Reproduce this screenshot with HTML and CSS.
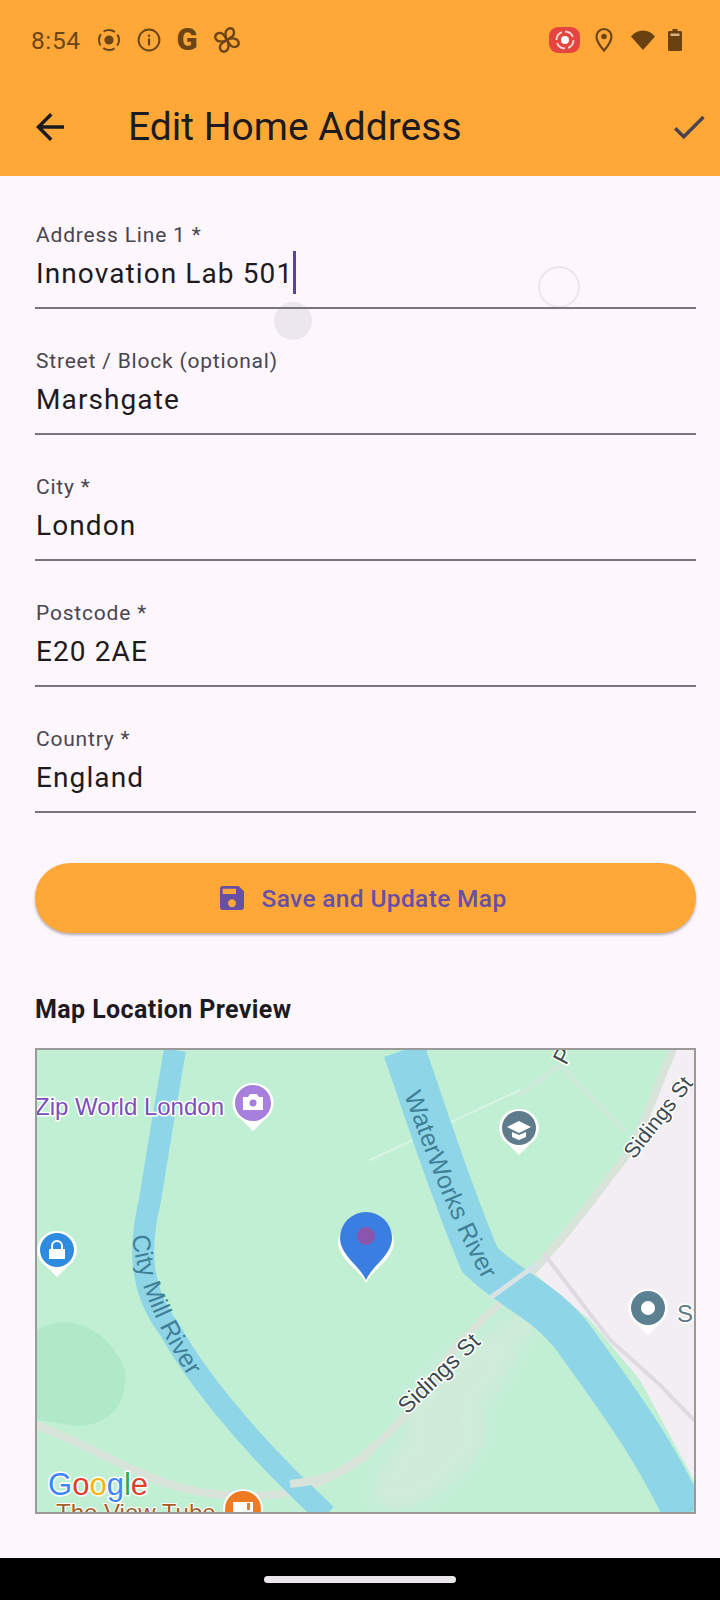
FILE: index.html
```html
<!DOCTYPE html>
<html lang="en">
<head>
  <meta charset="UTF-8">
  <title>Edit Home Address</title>
  <link rel="stylesheet" href="styles.css">
</head>
<body>
  <div class="screen">
    <div class="header">
      <div class="statusbar">
        <span class="time">8:54</span>
        <svg class="status-icon first" viewBox="0 0 24 24"><circle cx="12" cy="12" r="10" fill="none" stroke="#6b4514" stroke-width="2" stroke-dasharray="12 3.7" stroke-dashoffset="6"/><circle cx="12" cy="12" r="4.6" fill="#6b4514"/></svg>
        <svg class="status-icon" viewBox="0 0 24 24"><circle cx="12" cy="12" r="10.4" fill="none" stroke="#6b4514" stroke-width="2"/><rect x="10.9" y="10.4" width="2.2" height="7" fill="#6b4514"/><rect x="10.9" y="6.6" width="2.2" height="2.2" fill="#6b4514"/></svg>
        <span class="status-g">G</span>
        <svg class="status-fan" viewBox="0 0 24 24">
          <g fill="none" stroke="#6b4514" stroke-width="2">
            <path d="M12 12C10 8 10 3 14 2C18 1.500 19 6 17 8.500C15.500 10 13.500 11 12 12z"/>
            <path d="M12 12C10 8 10 3 14 2C18 1.500 19 6 17 8.500C15.500 10 13.500 11 12 12z" transform="rotate(90 12 12)"/>
            <path d="M12 12C10 8 10 3 14 2C18 1.500 19 6 17 8.500C15.500 10 13.500 11 12 12z" transform="rotate(180 12 12)"/>
            <path d="M12 12C10 8 10 3 14 2C18 1.500 19 6 17 8.500C15.500 10 13.500 11 12 12z" transform="rotate(270 12 12)"/>
          </g>
        </svg>
        <div class="status-right">
          <div class="rec-chip">
            <svg viewBox="0 0 24 24" width="24" height="24"><circle cx="12" cy="12" r="8.500" fill="none" stroke="#ffd9d4" stroke-width="1.800" stroke-dasharray="10 3.300"/><circle cx="12" cy="12" r="4" fill="#fff"/></svg>
          </div>
          <svg class="status-pin" viewBox="0 0 20 26"><path d="M10 2a7.500 7.500 0 0 0-7.500 7.500C2.500 15 10 23.500 10 23.500S17.500 15 17.500 9.500A7.500 7.500 0 0 0 10 2z" fill="none" stroke="#6b4514" stroke-width="2.200"/><circle cx="10" cy="9.500" r="2.800" fill="#6b4514"/></svg>
          <svg class="status-wifi" viewBox="0 0 26 22"><path d="M13 21L1 7.500C4 3.500 8.200 1.500 13 1.500S22 3.500 25 7.500z" fill="#69400f"/></svg>
          <svg class="status-battery" viewBox="0 0 14 22"><path d="M4.500 0h5v2H12.500a1.500 1.500 0 0 1 1.500 1.500V20.500A1.500 1.500 0 0 1 12.500 22H1.500A1.500 1.500 0 0 1 0 20.500V3.500A1.500 1.500 0 0 1 1.500 2H4.500z" fill="#69400f"/><rect x="2.500" y="4.500" width="9" height="2.500" fill="#dcb27a"/></svg>
        </div>
      </div>
      <div class="appbar">
        <svg class="bar-icon" viewBox="0 0 24 24"><path d="M20 11H7.830l5.590-5.590L12 4l-8 8 8 8 1.410-1.410L7.830 13H20v-2z"/></svg>
        <h1 class="title">Edit Home Address</h1>
        <svg class="bar-icon check" viewBox="0 0 24 24"><path d="M9 16.170L4.830 12l-1.420 1.410L9 19 21 7l-1.410-1.410z"/></svg>
      </div>
    </div>

    <div class="content">
      <div class="ripple-ring"></div>
      <div class="ripple-blob"></div>

      <div class="field">
        <div class="field-label">Address Line 1 *</div>
        <div class="field-value">Innovation Lab 501<span class="caret"></span></div>
      </div>
      <div class="field">
        <div class="field-label">Street / Block (optional)</div>
        <div class="field-value">Marshgate</div>
      </div>
      <div class="field">
        <div class="field-label">City *</div>
        <div class="field-value">London</div>
      </div>
      <div class="field">
        <div class="field-label">Postcode *</div>
        <div class="field-value">E20 2AE</div>
      </div>
      <div class="field">
        <div class="field-label">Country *</div>
        <div class="field-value">England</div>
      </div>

      <button class="save-btn">
        <svg viewBox="0 0 24 24" width="32" height="32"><path d="M17 3H5c-1.110 0-2 .9-2 2v14c0 1.100.89 2 2 2h14c1.100 0 2-.9 2-2V7l-4-4zm-5 16c-1.660 0-3-1.340-3-3s1.340-3 3-3 3 1.340 3 3-1.340 3-3 3zm3-10H5V5h10v4z"/></svg>
        Save and Update Map
      </button>

      <h2 class="map-title">Map Location Preview</h2>

      <div class="map">
        <!-- viewBox is in page pixels so map features read off the screenshot directly -->
        <svg viewBox="37 1050 657 462" width="657" height="462">
          <defs>
            <filter id="soft"><feGaussianBlur stdDeviation="9"/></filter>
          </defs>
          <rect x="37" y="1050" width="657" height="462" fill="#c0efd4"/>
          <path d="M37 1330C70 1310 110 1330 125 1370C130 1410 100 1430 70 1425L37 1420z" fill="#b0e9c8"/>
          <path d="M675 1050L623 1160L530 1270L590 1320L640 1380L694 1480V1050z" fill="#f2eef3"/>

          <g fill="#dce8de" filter="url(#soft)" opacity=".6">
            <ellipse cx="460" cy="1385" rx="70" ry="30" transform="rotate(-40 460 1385)"/>
            <ellipse cx="430" cy="1460" rx="70" ry="32" transform="rotate(-40 430 1460)"/>
            <ellipse cx="515" cy="1330" rx="34" ry="14" transform="rotate(-40 515 1330)"/>
          </g>

          <g fill="none" stroke-linecap="round">
            <path d="M672 1052C655 1090 640 1140 623 1160S560 1250 493 1310S430 1400 370 1450S260 1500 207 1493S120 1460 37 1425" stroke-width="8" stroke="#d8e4da"/>
            <path d="M560 1065L625 1130M560 1065L520 1095" stroke-width="5" stroke="#cde9da"/>
            <path d="M370 1160L520 1090" stroke-width="2" stroke="#d6f3e3"/>
            <path d="M545 1255L610 1340L660 1385L694 1420" stroke-width="4" stroke="#dedbe0"/>
          </g>

          <g fill="none" stroke="#8fd5e8">
            <path d="M175 1050C168 1090 162 1125 150 1200C138 1250 140 1290 170 1330C195 1375 240 1430 290 1480L326 1515" stroke-width="22"/>
            <path d="M404 1050C425 1110 450 1190 480 1260C510 1290 545 1300 575 1340C610 1390 650 1440 685 1515" stroke-width="42"/>
          </g>
          <path d="M490 1298L540 1262" stroke="#d8e3e6" stroke-width="5" fill="none"/>
          <path d="M290 1484C330 1480 350 1470 372 1450" stroke="#d8e4da" stroke-width="8" fill="none"/>

          <path id="cityPath" d="M132 1236C138 1284 158 1334 204 1400" fill="none"/>
          <path id="waterPath" d="M404 1095C425 1150 450 1225 497 1305" fill="none"/>
          <text class="map-river"><textPath href="#cityPath">City Mill River</textPath></text>
          <text class="map-river"><textPath href="#waterPath">WaterWorks River</textPath></text>
          <text class="map-road road-small" transform="translate(634 1160) rotate(-52)">Sidings St</text>
          <text class="map-road" transform="translate(407 1415) rotate(-44)">Sidings St</text>
          <text class="map-road" transform="translate(566 1066) rotate(-62)">P</text>
          <text class="map-poi-grey" x="677" y="1322">St</text>
          <text class="map-poi-purple" x="35" y="1115">Zip World London</text>

          <g>
            <path d="M253 1083a20 20 0 0 1 11 37l-11 11l-11-11a20 20 0 0 1 11-37z" fill="#fff"/>
            <circle cx="253" cy="1103" r="18" fill="#a77fdc"/>
            <path d="M243 1097h5l2-3h7l2 3h4v13h-20z" fill="#fff"/>
            <circle cx="253" cy="1103" r="3.500" fill="#a77fdc"/>
          </g>
          <g>
            <path d="M57 1231a19 19 0 0 1 11 35l-11 11l-11-11a19 19 0 0 1 11-35z" fill="#fff"/>
            <circle cx="57" cy="1250" r="17" fill="#2f8be0"/>
            <rect x="49" y="1249" width="16" height="10" fill="#fff"/>
            <path d="M52 1249v-3a5 5 0 0 1 10 0v3" fill="none" stroke="#fff" stroke-width="2"/>
          </g>
          <g>
            <path d="M519 1109a19 19 0 0 1 11 35l-11 11l-11-11a19 19 0 0 1 11-35z" fill="#fff"/>
            <circle cx="519" cy="1128" r="17" fill="#5f7c8c"/>
            <path d="M507 1127l12-6l12 6l-12 6z" fill="#fff"/>
            <path d="M512 1132v5l7 3l7-3v-5l-7 3z" fill="#fff"/>
          </g>
          <g>
            <path d="M648 1289a19 19 0 0 1 11 35l-11 11l-11-11a19 19 0 0 1 11-35z" fill="#fff"/>
            <circle cx="648" cy="1308" r="17" fill="#5b8091"/>
            <circle cx="648" cy="1308" r="7" fill="#fff"/>
          </g>
          <g>
            <circle cx="243" cy="1509" r="20" fill="#fff"/>
            <circle cx="243" cy="1509" r="18" fill="#ee7b22"/>
            <rect x="233" y="1502" width="20" height="14" fill="#fff"/>
            <rect x="247" y="1503" width="3" height="7" fill="#ee7b22"/>
          </g>

          <path d="M366 1216a28 28 0 0 1 28 26c0 17-22 28-28 41c-6-13-28-24-28-41a28 28 0 0 1 28-26z" fill="#fff"/>
          <path d="M366 1212a26 26 0 0 1 26 26c0 17-20 28-26 42c-6-14-26-25-26-42a26 26 0 0 1 26-26z" fill="#3a7ee2"/>
          <circle cx="366" cy="1236" r="9" fill="#8a55ab"/>

          <text class="map-google" x="48" y="1495"><tspan fill="#4285f4">G</tspan><tspan fill="#e0402f">o</tspan><tspan fill="#f5b60d">o</tspan><tspan fill="#4285f4">g</tspan><tspan fill="#34a853">l</tspan><tspan fill="#e0402f">e</tspan></text>
          <text class="map-poi-orange" x="56" y="1521">The View Tube</text>
        </svg>
      </div>
    </div>

    <div class="navbar"><div class="home-pill"></div></div>
  </div>
</body>
</html>
```
FILE: styles.css
```css
html, body {
  margin: 0;
  padding: 0;
}
body {
  font-family: Roboto, "Noto Sans", sans-serif;
  background: #fdf6fc;
  color: #1d1b20;
}
.screen {
  width: 720px;
  height: 1600px;
  display: flex;
  flex-direction: column;
  overflow: hidden;
}

/* top orange area */
.header {
  height: 176px;
  background: #ffa838;
}
.statusbar {
  height: 78px;
  box-sizing: border-box;
  display: flex;
  align-items: center;
  padding: 2px 38px 0 31px;
  color: #6b4514;
}
.time {
  font-size: 24.5px;
  letter-spacing: 0.6px;
  width: 66px;
}
.status-icon {
  width: 24px;
  height: 24px;
  margin-right: 16px;
}
.status-g {
  width: 24px;
  margin: 0 14px 0 -2px;
  font-size: 31px;
  font-weight: 900;
  text-align: center;
  line-height: 24px;
}
.status-fan {
  width: 28px;
  height: 28px;
}
.status-right {
  margin-left: auto;
  display: flex;
  align-items: center;
}
.rec-chip {
  width: 31px;
  height: 26px;
  border-radius: 9px;
  background: #e4463f;
  display: flex;
  align-items: center;
  justify-content: center;
}
.status-pin {
  width: 20px;
  height: 26px;
  margin-left: 14px;
}
.status-wifi {
  width: 26px;
  height: 22px;
  margin-left: 16px;
}
.status-battery {
  width: 14px;
  height: 22px;
  margin-left: 12px;
}
.appbar {
  height: 98px;
  display: flex;
  align-items: center;
  padding: 0 10px 0 29px;
}
.bar-icon {
  width: 42px;
  height: 42px;
  fill: #1d1b20;
  flex-shrink: 0;
}
.bar-icon.check {
  margin-left: auto;
  fill: #49454f;
}
.title {
  margin: 0 0 0 57px;
  font-size: 39px;
  font-weight: 400;
  line-height: 44px;
}

/* form */
.content {
  position: relative;
  flex: 1;
  padding: 47px 24px 0 35px;
}
.ripple-ring {
  position: absolute;
  left: 538px;
  top: 90px;
  width: 38px;
  height: 38px;
  border: 2px solid #ebe6ee;
  border-radius: 50%;
}
.ripple-blob {
  position: absolute;
  left: 274px;
  top: 126px;
  width: 38px;
  height: 38px;
  border-radius: 50%;
  background: #ece6ee;
}
.field {
  position: relative;
  height: 86px;
  margin-bottom: 40px;
  border-bottom: 2px solid #79747e;
  box-sizing: border-box;
}
.field-label {
  padding-left: 1px;
  font-size: 21px;
  line-height: 24px;
  letter-spacing: 0.8px;
  color: #49454f;
}
.field-value {
  margin-top: 3px;
  padding-left: 1px;
  font-size: 28px;
  line-height: 48px;
  letter-spacing: 1.1px;
  white-space: nowrap;
}
.caret {
  display: inline-block;
  width: 3px;
  height: 43px;
  background: #5a4596;
  vertical-align: -11px;
}
.save-btn {
  display: flex;
  align-items: center;
  justify-content: center;
  gap: 13px;
  width: 100%;
  height: 70px;
  margin-top: 50px;
  padding: 0 8px 0 0;
  border: none;
  border-radius: 35px;
  background: #ffa838;
  color: #6750a4;
  font-family: inherit;
  font-size: 24.5px;
  font-weight: 500;
  letter-spacing: 0.35px;
  box-shadow: 0 2px 3px rgba(0,0,0,0.3);
}
.save-btn svg {
  fill: #6750a4;
}
.map-title {
  margin: 62px 0 0;
  font-size: 25px;
  font-weight: 700;
  line-height: 30px;
  letter-spacing: 0.4px;
}
.map {
  width: 661px;
  height: 466px;
  margin-top: 23px;
  border: 2px solid #9b9a98;
  box-sizing: border-box;
  overflow: hidden;
}
.map svg {
  display: block;
}
.map text {
  font-family: "Liberation Sans", Arial, sans-serif;
  paint-order: stroke;
  stroke-linejoin: round;
}
.map-river {
  font-size: 25px;
  fill: #3f8097;
}
.map-road {
  font-size: 23px;
  fill: #3c4a50;
  stroke: #fff;
  stroke-width: 3px;
}
.road-small {
  font-size: 21.5px;
}
.map-poi-purple {
  font-size: 24px;
  fill: #7b4fb8;
  stroke: #fff;
  stroke-width: 3px;
}
.map-poi-grey {
  font-size: 24px;
  fill: #5f7a85;
  stroke: #fff;
  stroke-width: 3px;
}
.map-poi-orange {
  font-size: 24px;
  fill: #a5602a;
  stroke: #fff;
  stroke-width: 2px;
}
.map-google {
  font-size: 31px;
  stroke: #fff;
  stroke-width: 3px;
}

/* bottom gesture bar */
.navbar {
  height: 42px;
  background: #000;
  display: flex;
  align-items: center;
  justify-content: center;
}
.home-pill {
  width: 192px;
  height: 7px;
  border-radius: 4px;
  background: #e8e6e8;
}
```
